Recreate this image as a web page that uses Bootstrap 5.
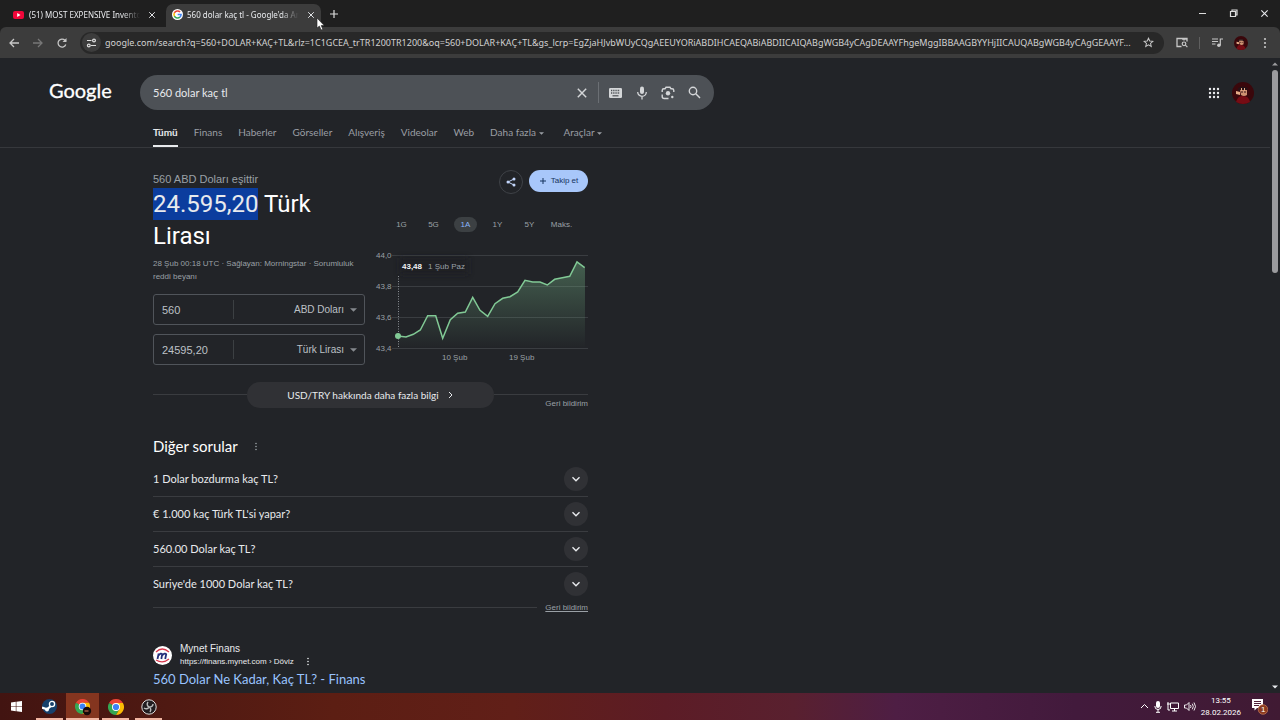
<!DOCTYPE html>
<html lang="tr" data-bs-theme="dark">
<head>
<meta charset="utf-8">
<meta name="viewport" content="width=device-width, initial-scale=1">
<title>560 dolar kaç tl - Google'da Ara</title>
<link href="https://cdn.jsdelivr.net/npm/bootstrap@5.3.0/dist/css/bootstrap.min.css" rel="stylesheet">
<style>
:root{--product:Lato,Roboto,sans-serif;--plain:"Liberation Sans",Arial,sans-serif;--ui:"Noto Sans","Open Sans",sans-serif}
body{height:100vh;overflow:hidden;background:#222428;color:#e8eaed;font-family:var(--plain);font-size:11px;line-height:16px}
button{background:none;border:0;padding:0;color:inherit;line-height:inherit}
svg{display:block;flex:none}
a{text-decoration:none;color:inherit}
input,select{background:none;border:0;outline:0;color:inherit;min-width:0;padding:0}
/* browser frame */
.frame{background:#1f1f1f;font-family:var(--ui)}
.strip{height:27px;font-size:8px;padding-left:12px}
.tab-item{height:23px;align-self:flex-end;padding-bottom:2px}
.tab-first{width:154px;padding-right:10px}
.tab-active{width:155px;background:#3c3c3c;border-radius:7px 7px 0 0;padding:0 6px 2px}
.tab-name{overflow:hidden;white-space:nowrap;-webkit-mask-image:linear-gradient(90deg,#000 84%,transparent)}
.toolbar{height:31px;background:#3c3c3c;color:#c7c7c7;border-radius:6px 6px 0 0;padding:0 13px 0 8px}
.nav-btns{gap:12px;padding-right:12px}
.ext-btns{gap:11px;padding-left:12px}
.ext-btns .vr{width:1px;height:12px;align-self:center}
.omnibox{height:22px;border-radius:11px;background:#282828;padding:0 10px 0 2px}
.omnibox input{font-size:9px;color:#d2d2d2;text-overflow:ellipsis}
.site-info{width:19px;height:19px;border-radius:50%;background:#3c3c3c}
.win-btns{gap:22px;padding-right:11px}
.pointer{position:absolute;left:316px;top:17px;z-index:5}
/* search header */
.head-row{padding-top:17px}
.logo-col{width:140px;padding-left:49px;font-family:var(--product)}
.search-box{width:574px;height:35px;border-radius:18px;background:#4d5156;padding:0 13px;color:#d4d6d8}
.search-box input{font-family:var(--product);font-size:11px;color:#e8eaed}
.search-tools{gap:13px}
.split{width:1px;height:21px;background:#6b6f74;margin:0 9px 0 10px}
.head-right{gap:12px}
.nav-row{margin-top:15px;padding-left:153px;border-bottom:1px solid #36383c;font-family:var(--product);font-size:10px;color:#9a9ea4;gap:16px}
.nav-row a{height:22px;line-height:14px;white-space:nowrap}
.nav-row a.on{color:#e8eaed;font-weight:700;border-bottom:2px solid #e8eaed}
.avatar-lg{width:22px;height:22px}
/* results */
.results{width:435px;margin-left:153px;padding-top:22px}
.fin-left{width:212px;padding-top:1px}
.fin-left h2{font-family:Roboto,sans-serif;font-size:24px;line-height:32px;font-weight:400;margin:1px 0 5px}
.fin-left mark{display:inline-block;background:#0b3d9e;color:#e8eaed;padding:0}
.dim{color:#9aa0a6}
.tiny{font-size:8px;line-height:13px}
.amounts{display:grid;gap:9px;margin-top:11px}
.amount{height:31px;border:1px solid #50545a;border-radius:3px;padding:0 7px 0 8px;gap:6px;color:#bdc1c6}
.amount input{width:72px;border-right:1px solid #3c4043;height:19px}
.amount select{appearance:none;text-align-last:right;flex:1;font-size:10px}
.amount svg{color:#85898e}
.fin-btns{gap:6px}
.share{width:24px;height:24px;border:1px solid #3f4247;border-radius:50%;color:#c3d6fb}
.follow{width:59px;height:22px;border-radius:11px;background:#a8c7fa;color:#17345f;font-size:8px}
.ranges{font-size:8px;color:#9aa0a6;line-height:15px;gap:9px;margin:23px 0 16px 15px}
.ranges button{width:23px;border-radius:8px}
.ranges button.on{background:#3c4043;color:#8ab4f8}
.rule{border-top:1px solid #3a3c40}
.more-row{margin-top:17px}
.more{width:247px;height:26px;border-radius:13px;background:#303135;font-family:var(--product);font-size:10px}
.side-rule{flex:1 1 0;padding-top:12px}
.side-rule a{display:block;padding-top:2px}
.questions{margin-top:26px}
.dq{font-family:var(--product);font-size:15px;line-height:20px;font-weight:400}
.qa{font-family:var(--product);font-size:11px;margin:5px 0 0}
.qa button{height:35px;width:100%;text-align:left}
.qa li+li{border-top:1px solid #3a3c40}
.qa li+li button{height:34px}
.chev{width:24px;height:24px;border-radius:50%;background:#303135}
.site-result{margin-top:29px}
.result-title{font-family:var(--product);font-size:13px;line-height:18px;color:#99c3ff;font-weight:400;margin:2px 0 0}
.site-name{font-size:10px;line-height:12px}
/* scrollbar */
.sbar{width:10px;padding:4px 0}
.thumb{width:6px;height:203px;border-radius:3px;background:#9b9b9e}
/* taskbar */
.taskbar{height:27px;background:linear-gradient(90deg,#421411 0,#5c1e13 26%,#611f18 40%,#5c1c26 52%,#59202f 62%,#4e1e44 70%,#421a3c 84%,#401a33 100%)}
.app{width:33px;height:27px}
.app.run{background:linear-gradient(#f1b5a2,#f1b5a2) bottom/27px 2px no-repeat}
.app.front{background-color:#84351f;background-size:33px 2px}
.tray{gap:5px;padding-right:12px}
.clock{font-family:Roboto,sans-serif;font-size:8px;line-height:12px;text-align:center;color:#fff;padding-right:6px}
</style>
</head>
<body class="d-flex flex-column">
<svg width="0" height="0" class="position-absolute" aria-hidden="true">
  <defs>
    <symbol id="x" viewBox="0 0 10 10"><path d="M1.5 1.5l7 7m0-7l-7 7" stroke="currentColor" stroke-width="1.2"/></symbol>
    <symbol id="dots" viewBox="0 0 4 12"><g fill="currentColor"><circle cx="2" cy="2" r="1.1"/><circle cx="2" cy="6" r="1.1"/><circle cx="2" cy="10" r="1.1"/></g></symbol>
    <symbol id="down" viewBox="0 0 10 10"><path d="M1.5 3.2L5 6.7l3.500-3.500" fill="none" stroke="currentColor" stroke-width="1.4"/></symbol>
    <symbol id="caret" viewBox="0 0 8 4"><path d="M0 0h8L4 4z" fill="currentColor"/></symbol>
    <symbol id="face" viewBox="0 0 22 22"><circle cx="11" cy="11" r="11" fill="#3a070b"/><path d="M4 20q2-7 7-6 6 0 7 6-7 4-14 0z" fill="#760c14"/><path d="M6 6q5-3 10 0l-1 3H6z" fill="#271015"/><path d="M8 8h7v5q-3 2-6 0z" fill="#cf9272"/><path d="M4 9l4 1v3l-4-1zM9 6h1v3H9zM12 6h1v3h-1z" fill="#e5ac87"/><path d="M9 10h2M12 10h2" stroke="#351519"/></symbol>
    <symbol id="chrome" viewBox="0 0 18 18"><path d="M9 9L1.200 4.500A9 9 0 0 1 16.800 4.500H9z" fill="#ea4335"/><path d="M9 9L1.200 4.500A9 9 0 0 0 9 18l4-6.700z" fill="#34a853"/><path d="M9 4.500h7.800A9 9 0 0 1 9 18l4-6.700z" fill="#fbbc04"/><circle cx="9" cy="9" r="4.500" fill="#fff"/><circle cx="9" cy="9" r="3.500" fill="#3b82f6"/></symbol>
  </defs>
</svg>

<header class="frame">
  <div class="strip d-flex">
    <div class="tab-item tab-first d-flex align-items-center">
      <svg width="13" height="10" viewBox="0 0 13 10"><rect x="1" y="1" width="11" height="8" rx="2" fill="#f1073a"/><path d="M5.200 3v4l3.300-2z" fill="#fff"/></svg>
      <span class="tab-name flex-grow-1 ms-1">(51) MOST EXPENSIVE Inventory</span>
      <button aria-label="Sekmeyi kapat" class="ms-2"><svg width="8" height="8"><use href="#x"/></svg></button>
    </div>
    <div class="tab-item tab-active d-flex align-items-center">
      <svg width="11" height="11" viewBox="0 0 12 12"><circle cx="6" cy="6" r="6" fill="#fff"/><g fill="none" stroke-width="1.700"><path d="M8.800 3.300A3.900 3.900 0 0 0 2.600 4.300" stroke="#ea4335"/><path d="M2.600 4.300a3.900 3.900 0 0 0 0 3.500" stroke="#fbbc04"/><path d="M2.600 7.800a3.900 3.900 0 0 0 6 1.100" stroke="#34a853"/><path d="M8.600 8.900A3.900 3.900 0 0 0 9.900 6H6.200" stroke="#4285f4"/></g></svg>
      <span class="tab-name flex-grow-1 ms-1">560 dolar kaç tl - Google'da Ara</span>
      <button aria-label="Sekmeyi kapat" class="ms-2"><svg width="8" height="8"><use href="#x"/></svg></button>
    </div>
    <button aria-label="Yeni sekme" class="ms-2"><svg width="10" height="10" viewBox="0 0 10 10"><path d="M5 1v8M1 5h8" stroke="#ddd" stroke-width="1.200"/></svg></button>
    <div class="win-btns d-flex align-items-center ms-auto">
      <button aria-label="Küçült"><svg width="9" height="9" viewBox="0 0 9 9"><path d="M1 4.500h7" stroke="#ddd"/></svg></button>
      <button aria-label="Önceki boyut"><svg width="9" height="9" viewBox="0 0 9 9"><path d="M1.500 2.500h5v5h-5zM3 2V1h5v5H7" fill="none" stroke="#ddd" stroke-width="1.200"/></svg></button>
      <button aria-label="Kapat"><svg width="9" height="9"><use href="#x"/></svg></button>
    </div>
  </div>
  <div class="toolbar d-flex align-items-center">
    <div class="nav-btns d-flex">
      <button aria-label="Geri"><svg width="12" height="12" viewBox="0 0 12 12"><path d="M11 6H2.500M6 2L2 6l4 4" fill="none" stroke="currentColor" stroke-width="1.300"/></svg></button>
      <button aria-label="İleri"><svg width="12" height="12" viewBox="0 0 12 12"><path d="M1 6h8.500M6 2l4 4-4 4" fill="none" stroke="#777" stroke-width="1.300"/></svg></button>
      <button aria-label="Yenile"><svg width="12" height="12" viewBox="0 0 12 12"><path d="M9.800 7.500A4 4 0 1 1 8.900 3.200L10 4.300" fill="none" stroke="currentColor" stroke-width="1.300"/><path d="M10.500 1v4h-4z" fill="currentColor"/></svg></button>
    </div>
    <div class="omnibox d-flex align-items-center flex-grow-1">
      <button aria-label="Site bilgileri" class="site-info d-flex align-items-center justify-content-center"><svg width="11" height="10" viewBox="0 0 11 10"><g fill="none" stroke="#ddd" stroke-width="1.200"><path d="M1 2.500h4.500M5 7.500h5"/><circle cx="8" cy="2.500" r="1.400"/><circle cx="2.800" cy="7.500" r="1.400"/></g></svg></button>
      <input class="flex-grow-1 ms-1 me-2" type="text" aria-label="Adres çubuğu" value="google.com/search?q=560+DOLAR+KAÇ+TL&amp;rlz=1C1GCEA_trTR1200TR1200&amp;oq=560+DOLAR+KAÇ+TL&amp;gs_lcrp=EgZjaHJvbWUyCQgAEEUYORiABDIHCAEQABiABDIICAIQABgWGB4yCAgDEAAYFhgeMggIBBAAGBYYHjIICAUQABgWGB4yCAgGEAAYF...">
      <button aria-label="Yer işareti ekle"><svg width="11" height="11" viewBox="0 0 12 12"><path d="M6 1.300l1.400 3.100 3.400.3-2.600 2.200.8 3.400L6 8.500l-3 1.800.8-3.400L1.200 4.700l3.400-.3z" fill="none" stroke="currentColor" stroke-width="1.100"/></svg></button>
    </div>
    <div class="ext-btns d-flex align-items-center">
      <button aria-label="Yan panel"><svg width="12" height="11" viewBox="0 0 12 11"><path d="M5.500 9.500H1v-8h10v3M8 1.500v2M6 2h5" fill="none" stroke="currentColor" stroke-width="1.300"/><circle cx="8" cy="6.800" r="1.800" fill="none" stroke="currentColor" stroke-width="1.200"/><path d="M9.400 8.200l2 2" stroke="currentColor" stroke-width="1.200"/></svg></button>
      <span class="vr"></span>
      <button aria-label="Medya"><svg width="12" height="11" viewBox="0 0 12 11"><path d="M1 2h6M1 4.500h6M1 7h3.500M9.300 8V2H12" fill="none" stroke="currentColor" stroke-width="1.200"/><circle cx="7.900" cy="8.200" r="1.800" fill="currentColor"/></svg></button>
      <button aria-label="Profil"><svg width="14" height="14"><use href="#face"/></svg></button>
      <button aria-label="Menü" class="ms-1"><svg width="4" height="12"><use href="#dots"/></svg></button>
    </div>
  </div>
</header>
<svg class="pointer" width="9" height="14" viewBox="0 0 9 14"><path d="M1 1v10l2.400-2 1.700 4 1.700-.8L5.200 8.500h3z" fill="#fff" stroke="#222" stroke-width=".6"/></svg>

<div class="d-flex flex-grow-1 overflow-hidden">
<main class="flex-grow-1">
  <form class="head-row d-flex align-items-center" role="search">
    <a href="#" class="logo-col" aria-label="Google"><svg width="66" height="28" viewBox="0 0 66 28"><text x="0" y="19" font-size="20" fill="#fff" stroke="#fff" stroke-width=".3">Google</text></svg></a>
    <div class="search-box d-flex align-items-center">
      <input class="flex-grow-1" type="text" aria-label="Ara" value="560 dolar kaç tl">
      <button type="button" aria-label="Temizle"><svg width="12" height="12"><use href="#x"/></svg></button>
      <span class="split flex-shrink-0"></span>
      <div class="search-tools d-flex align-items-center">
      <button type="button" aria-label="Klavye"><svg width="15" height="12" viewBox="0 0 15 12"><rect x="1" y="1" width="13" height="10" rx="1.300" fill="currentColor"/><path d="M3 3.500h9M3 6h9" stroke="#4d5156" stroke-width="1.300" stroke-dasharray="1.300 .9"/><path d="M4.500 8.800h6" stroke="#4d5156" stroke-width="1.200"/></svg></button>
      <button type="button" aria-label="Sesli arama"><svg width="12" height="14" viewBox="0 0 12 14"><rect x="4" y="0.500" width="4" height="7.500" rx="2" fill="currentColor"/><path d="M1.700 6a4.300 4.300 0 0 0 8.600 0M6 10.300V13.500" fill="none" stroke="currentColor" stroke-width="1.300"/></svg></button>
      <button type="button" aria-label="Görselle arama"><svg width="14" height="14" viewBox="0 0 14 14"><path d="M1.200 6V4.500q0-1.700 1.700-1.700H4L5 1.300h4l1 1.500h1q1.800 0 1.800 1.700V6M1.200 8.500v2q0 2 2 2H7.500" fill="none" stroke="currentColor" stroke-width="1.400"/><circle cx="7" cy="7.300" r="2.200" fill="currentColor"/><circle cx="11.300" cy="11" r="1.200" fill="currentColor"/></svg></button>
      <button aria-label="Google'da Ara"><svg width="13" height="13" viewBox="0 0 13 13"><circle cx="5" cy="5" r="3.700" fill="none" stroke="currentColor" stroke-width="1.400"/><path d="M7.800 7.800l4.200 4.200" stroke="currentColor" stroke-width="1.500"/></svg></button>
      </div>
    </div>
    <div class="head-right ms-auto d-flex align-items-center pe-3">
      <button type="button" aria-label="Google uygulamaları"><svg width="12" height="12" viewBox="0 0 12 12"><path d="M2 2h0M6 2h0M10 2h0M2 6h0M6 6h0M10 6h0M2 10h0M6 10h0M10 10h0" stroke="#e8eaed" stroke-width="2.400" stroke-linecap="round"/></svg></button>
      <button type="button" aria-label="Google hesabı"><svg class="avatar-lg"><use href="#face"/></svg></button>
    </div>
  </form>
  <nav class="nav-row d-flex">
    <a href="#" class="on">Tümü</a><a href="#">Finans</a><a href="#">Haberler</a><a href="#">Görseller</a><a href="#">Alışveriş</a><a href="#">Videolar</a><a href="#">Web</a>
    <a href="#">Daha fazla <svg class="d-inline-block" width="5" height="3"><use href="#caret"/></svg></a>
    <a href="#" class="ms-1">Araçlar <svg class="d-inline-block" width="5" height="3"><use href="#caret"/></svg></a>
  </nav>

  <div class="results">
    <section class="d-flex justify-content-between">
      <div class="fin-left">
        <div class="dim">560 ABD Doları eşittir</div>
        <h2><mark>24.595,20</mark> Türk Lirası</h2>
        <div class="dim tiny">28 Şub 00:18 UTC · Sağlayan: Morningstar · <a href="#">Sorumluluk reddi beyanı</a></div>
        <div class="amounts">
        <div class="amount d-flex align-items-center"><input type="text" value="560" aria-label="Tutar"><select aria-label="Para birimi"><option>ABD Doları</option></select><svg width="7" height="4"><use href="#caret"/></svg></div>
        <div class="amount d-flex align-items-center"><input type="text" value="24595,20" aria-label="Karşılık"><select aria-label="Hedef para birimi"><option>Türk Lirası</option></select><svg width="7" height="4"><use href="#caret"/></svg></div>
        </div>
      </div>
      <div class="fin-right">
        <div class="fin-btns d-flex justify-content-end">
          <button class="share d-flex align-items-center justify-content-center" aria-label="Paylaş"><svg width="10" height="10" viewBox="0 0 10 10"><path d="M8 2L2 5l6 3" fill="none" stroke="currentColor"/><circle cx="8" cy="2" r="1.500" fill="currentColor"/><circle cx="2" cy="5" r="1.500" fill="currentColor"/><circle cx="8" cy="8" r="1.500" fill="currentColor"/></svg></button>
          <button class="follow d-flex align-items-center justify-content-center gap-1"><svg width="8" height="8" viewBox="0 0 8 8"><path d="M4 1v6M1 4h6" stroke="currentColor"/></svg>Takip et</button>
        </div>
        <div class="ranges d-flex"><button>1G</button><button>5G</button><button class="on">1A</button><button>1Y</button><button>5Y</button><button>Maks.</button></div>
        <svg width="213" height="116" viewBox="375 248 213 116" font-size="8" fill="#9aa0a6" role="img" aria-label="USD/TRY grafiği">
          <defs><linearGradient id="area" x1="0" y1="0" x2="0" y2="1"><stop offset="0" stop-color="#81c995" stop-opacity=".36"/><stop offset="1" stop-color="#81c995" stop-opacity="0"/></linearGradient>
          <filter id="soft" x="-30%" y="-60%" width="160%" height="220%"><feGaussianBlur stdDeviation="3"/></filter></defs>
          <path d="M392 255.500h196M392 286.500h196M392 317.500h196M392 348.500h196" stroke="#3a3d41"/>
          <path d="M398 336l8 1 7-3 7-4 8-14h8l7 22 7-18 8-7 7-1 8-15 7 13 8 6 7-12 8-6 7-2 8-4 7-12 8 2h7l7 3 8-6 7-1 8-2 7-14 8 6V348H398z" fill="url(#area)"/>
          <path d="M398 336l8 1 7.300-2.700 7-4.300 7.400-14.300h8l7 22.600 7.600-18.600 7.400-6.400 7.600-1.300 7.400-14.700 7.300 13 7.700 6 7.300-12.600 7.700-5.400 7.300-1.600 7.700-4.700 7.300-11.700 7.700 1.700h7.300l7.300 3 7.400-5.700 7.600-1.600 7.400-1.400 7.300-14.300 7.700 5.700" fill="none" stroke="#81c995" stroke-width="1.500"/>
          <rect x="400" y="258" width="68" height="16" fill="#1c1d20" opacity=".7" filter="url(#soft)"/>
          <path d="M398.500 276v72" stroke="#8b8f94" stroke-dasharray="1 1.500"/><circle cx="398" cy="336" r="3" fill="#81c995"/>
          <g><text x="376" y="258">44,0</text><text x="376" y="289">43,8</text><text x="376" y="320">43,6</text><text x="376" y="351">43,4</text><text x="442" y="360">10 Şub</text><text x="509" y="360">19 Şub</text></g>
          <text x="402" y="269" font-weight="700" fill="#f1f3f4">43,48</text><text x="428" y="269">1 Şub Paz</text>
        </svg>
      </div>
    </section>
    <div class="more-row d-flex align-items-stretch">
      <div class="side-rule"><div class="rule"></div></div>
      <button class="more d-flex align-items-center justify-content-center gap-2">USD/TRY hakkında daha fazla bilgi <svg width="7" height="8" viewBox="0 0 7 8"><path d="M2 1l3 3-3 3" fill="none" stroke="currentColor"/></svg></button>
      <div class="side-rule"><div class="rule text-end tiny dim"><a href="#">Geri bildirim</a></div></div>
    </div>
    <section class="questions">
      <div class="d-flex align-items-center"><h2 class="dq m-0">Diğer sorular</h2><button class="ms-3 dim" aria-label="Bu sonuç hakkında"><svg width="4" height="9"><use href="#dots"/></svg></button></div>
      <ul class="qa list-unstyled">
        <li><button class="d-flex align-items-center justify-content-between">1 Dolar bozdurma kaç TL? <span class="chev d-flex align-items-center justify-content-center"><svg width="10" height="10"><use href="#down"/></svg></span></button></li>
        <li><button class="d-flex align-items-center justify-content-between">€ 1.000 kaç Türk TL'si yapar? <span class="chev d-flex align-items-center justify-content-center"><svg width="10" height="10"><use href="#down"/></svg></span></button></li>
        <li><button class="d-flex align-items-center justify-content-between">560.00 Dolar kaç TL? <span class="chev d-flex align-items-center justify-content-center"><svg width="10" height="10"><use href="#down"/></svg></span></button></li>
        <li><button class="d-flex align-items-center justify-content-between">Suriye'de 1000 Dolar kaç TL? <span class="chev d-flex align-items-center justify-content-center"><svg width="10" height="10"><use href="#down"/></svg></span></button></li>
      </ul>
      <div class="d-flex align-items-center gap-2"><div class="rule flex-grow-1"></div><a href="#" class="tiny dim text-decoration-underline">Geri bildirim</a></div>
    </section>
    <article class="site-result">
      <div class="d-flex align-items-center gap-2">
        <svg width="19" height="19" viewBox="0 0 19 19"><circle cx="9.500" cy="9.500" r="9.500" fill="#fff"/><path d="M3 6q6-6 13 0M3 14q7 4 13-1" fill="none" stroke="#d7364b" stroke-width="1.200"/><path d="M4.500 13l1.200-5.500M5.500 9.500q2.500-3 3.700-1.200L8.300 13M9 9.500q3-3 4.200-1.200L12.200 13" fill="none" stroke="#25307b" stroke-width="1.800"/></svg>
        <div><div class="site-name">Mynet Finans</div><div class="d-flex align-items-center tiny"><cite class="fst-normal">https://finans.mynet.com › Döviz</cite><button class="ms-2 ps-1" aria-label="Diğer"><svg width="4" height="9"><use href="#dots"/></svg></button></div></div>
      </div>
      <h3 class="result-title"><a href="#">560 Dolar Ne Kadar, Kaç TL? - Finans</a></h3>
    </article>
  </div>
</main>
<div class="sbar d-flex flex-column align-items-center flex-shrink-0" aria-hidden="true">
  <svg width="6" height="4" viewBox="0 0 8 4"><path d="M0 4h8L4 0z" fill="#9b9b9e"/></svg><div class="thumb mt-1"></div><svg class="mt-auto" width="6" height="4"><use href="#caret"/></svg>
</div>
</div>

<footer class="taskbar d-flex align-items-center flex-shrink-0">
  <button class="app d-flex align-items-center justify-content-center" aria-label="Başlat"><svg width="11" height="11" viewBox="0 0 11 11"><path d="M0 1.500l4.800-.7v4.400H0zM5.400.7L11 0v5.200H5.400zM0 5.800h4.800v4.400L0 9.500zM5.400 5.800H11V11l-5.600-.8z" fill="#fff"/></svg></button>
  <button class="app run d-flex align-items-center justify-content-center" aria-label="Steam"><svg width="15" height="15" viewBox="0 0 15 15"><circle cx="7.500" cy="7.500" r="7.500" fill="#17406b"/><path d="M0 8.500l5 1.800L9 7l3-2" fill="none" stroke="#fff" stroke-width="2.200"/><circle cx="10" cy="5" r="2.600" fill="#17406b" stroke="#fff" stroke-width="1.300"/><circle cx="5" cy="10.500" r="2" fill="#fff"/></svg></button>
  <button class="app run front d-flex align-items-center justify-content-center" aria-label="Chrome profili"><svg width="18" height="18" viewBox="0 0 18 18"><use href="#chrome" x="1" y="1" width="15" height="15"/><circle cx="13" cy="13" r="4.200" fill="#160a0a"/><path d="M10.500 13h4" stroke="#a96045" stroke-width="1.400"/></svg></button>
  <button class="app run d-flex align-items-center justify-content-center" aria-label="Chrome"><svg width="16" height="16"><use href="#chrome"/></svg></button>
  <button class="app run d-flex align-items-center justify-content-center" aria-label="OBS"><svg width="16" height="16" viewBox="0 0 16 16"><circle cx="8" cy="8" r="7.200" fill="#211d20" stroke="#ddd"/><path d="M7 3q-2 3 1 5 4 0 4-3M8 8q-2 3-5 1M8 8q3 2 1 5" fill="none" stroke="#bbb" stroke-width="1.400"/></svg></button>
  <div class="tray ms-auto d-flex align-items-center text-white">
    <button aria-label="Gizli simgeler"><svg width="9" height="9" viewBox="0 0 9 9"><path d="M1 6l3.500-3.500L8 6" fill="none" stroke="#fff"/></svg></button>
    <svg width="8" height="12" viewBox="0 0 8 12"><rect x="2" y="0" width="4" height="7" rx="2" fill="#fff"/><path d="M.8 5q0 3.500 3.200 3.500T7.200 5M4 8v3M2 11.300h4" fill="none" stroke="#fff"/></svg>
    <svg width="12" height="11" viewBox="0 0 12 11"><path d="M3.500 2h8v5.500h-8zM7.500 7.500V10M5 10h5M1 1v4M0 3h3M1 5v4h2" fill="none" stroke="#fff"/></svg>
    <svg width="12" height="11" viewBox="0 0 12 11"><path d="M.5 4h2L5 1.500v8L2.500 7h-2zM6.500 4q1 1.500 0 3M8.300 2.700q2 2.800 0 5.600M10 1.500q3 4 0 8" fill="none" stroke="#fff" stroke-width=".9"/></svg>
    <div class="clock"><div>13:55</div><div>28.02.2026</div></div>
    <button aria-label="Bildirimler"><svg width="16" height="17" viewBox="0 0 16 17"><path d="M0 1h11v9H5l-2.500 2.500V10H0z" fill="#fff"/><path d="M2 3.500h7M2 5.500h7M2 7.500h5" stroke="#52213a"/><circle cx="11" cy="11.500" r="4.800" fill="#8b3a1e" stroke="#c97d5c" stroke-width=".7"/><text x="9" y="14" font-size="8" fill="#fff">1</text></svg></button>
  </div>
</footer>
<script src="https://cdn.jsdelivr.net/npm/bootstrap@5.3.0/dist/js/bootstrap.bundle.min.js"></script>
</body>
</html>
